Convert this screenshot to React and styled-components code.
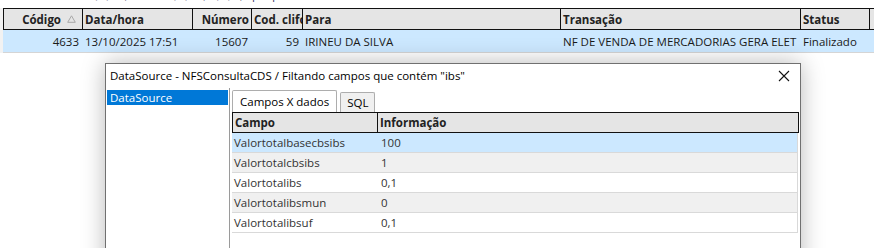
import React from "react";
import styled, { createGlobalStyle } from "styled-components";

const Global = createGlobalStyle`
  html, body { margin: 0; padding: 0; background: #fff; }
  body { font-family: "Open Sans", "Noto Sans", sans-serif; font-size: 11.5px; color: #1a1a1a; }
  * { box-sizing: border-box; }
`;

const Page = styled.div`
  position: relative;
  width: 874px;
  height: 248px;
  overflow: hidden;
  background: #fff;
`;

const TopStrip = styled.div`
  height: 8px;
  overflow: hidden;
`;

const ClippedLine = styled.div`
  margin-top: -12px;
  padding-left: 70px;
  line-height: 14px;
  color: #3d3a66;
  white-space: nowrap;
  letter-spacing: 3px;
`;

const COLS = "79px 110px 59px 51px 258px 240px 69px 1fr";

const MainGrid = styled.div`
  padding-left: 3px;
  background: #f2f2f2;
`;

const HeadRow = styled.div`
  display: grid;
  grid-template-columns: ${COLS};
  background: #e5e5e5;
  border-top: 1px solid #111;
  border-bottom: 1px solid #111;
  border-left: 1px solid #111;
  height: 22px;
`;

const HeadCell = styled.div`
  display: flex;
  align-items: center;
  justify-content: ${(p) => (p.$right ? "flex-end" : "flex-start")};
  gap: 6px;
  padding: 0 ${(p) => (p.$pr ? p.$pr : "2px")} 0 2px;
  border-right: 1px solid #111;
  font-weight: 700;
  color: #222;
  white-space: nowrap;
  overflow: hidden;
  text-overflow: clip;
`;

const DataRow = styled.div`
  display: grid;
  grid-template-columns: ${COLS};
  height: 23px;
  background: #cce8ff;
  border-bottom: 1px solid #d5d5d5;
`;

const DataCell = styled.div`
  display: flex;
  align-items: center;
  justify-content: ${(p) => (p.$right ? "flex-end" : "flex-start")};
  padding: 0 3px 0 3px;
  white-space: nowrap;
  overflow: hidden;
  color: #1a1a1a;
`;

const Dialog = styled.div`
  position: absolute;
  left: 105px;
  top: 63px;
  width: 696px;
  height: 220px;
  background: #fff;
  border: 1px solid #707070;
  box-shadow: 0 0 22px rgba(0, 0, 0, 0.28);
  display: flex;
  flex-direction: column;
`;

const TitleBar = styled.div`
  height: 24px;
  display: flex;
  align-items: center;
  justify-content: space-between;
  padding: 0 10px 1px 4px;
  color: #000;
  white-space: nowrap;
`;

const Body = styled.div`
  flex: 1;
  display: flex;
`;

const SidePanel = styled.div`
  width: 124px;
  border-right: 1px solid #9a9a9a;
  padding: 2px 1px 0 1px;
`;

const ListItem = styled.div`
  height: 15px;
  line-height: 15px;
  padding-left: 3px;
  background: ${(p) => (p.$selected ? "#0078d7" : "transparent")};
  color: ${(p) => (p.$selected ? "#fff" : "#000")};
`;

const MainPanel = styled.div`
  flex: 1;
  padding: 2px 0 0 2px;
`;

const Tabs = styled.div`
  display: flex;
  align-items: flex-end;
  gap: 3px;
  height: 22px;
`;

const Tab = styled.div`
  height: ${(p) => (p.$active ? "22px" : "20px")};
  padding: 0 ${(p) => (p.$active ? "7px" : "6px")};
  display: flex;
  align-items: center;
  border: 1px solid #adadad;
  border-bottom: none;
  border-radius: 2px 2px 0 0;
  background: ${(p) => (p.$active ? "#fff" : "#f0f0f0")};
  color: #000;
`;

const Table = styled.div`
  width: 567px;
`;

const TCOLS = "145px 1fr";

const THead = styled.div`
  display: grid;
  grid-template-columns: ${TCOLS};
  height: 21px;
  background: #e5e5e5;
  border: 1px solid #111;
`;

const THeadCell = styled.div`
  display: flex;
  align-items: center;
  padding-left: 2px;
  font-weight: 700;
  color: #222;
  border-right: ${(p) => (p.$last ? "none" : "1px solid #111")};
`;

const TRow = styled.div`
  display: grid;
  grid-template-columns: ${TCOLS};
  width: 566px;
  height: 20px;
  background: ${(p) => (p.$selected ? "#cce8ff" : p.$alt ? "#f0f0f0" : "#fff")};
  border-bottom: 1px solid #d9d9d9;
  border-right: 1px solid #d9d9d9;
`;

const TCell = styled.div`
  display: flex;
  align-items: center;
  padding-left: ${(p) => (p.$second ? "4px" : "2px")};
  color: #333;
`;

const SortIcon = () => (
  <svg width="9" height="8" viewBox="0 0 9 8">
    <path d="M4.5 0.8 L8.3 7.3 L0.7 7.3 Z" fill="none" stroke="#a8a8a8" strokeWidth="1" />
  </svg>
);

const CloseIcon = () => (
  <svg width="12" height="12" viewBox="0 0 12 12">
    <path d="M1 1 L11 11 M11 1 L1 11" stroke="#111" strokeWidth="1.1" />
  </svg>
);

const rows = [
  ["Valortotalbasecbsibs", "100"],
  ["Valortotalcbsibs", "1"],
  ["Valortotalibs", "0,1"],
  ["Valortotalibsmun", "0"],
  ["Valortotalibsuf", "0,1"],
];

export default function App() {
  return (
    <Page>
      <Global />
      <TopStrip>
        <ClippedLine>, , ( ), ; , , , ( ), ; ( ) ; p q</ClippedLine>
      </TopStrip>
      <MainGrid>
        <HeadRow>
          <HeadCell $right $pr="6px">
            Código <SortIcon />
          </HeadCell>
          <HeadCell>Data/hora</HeadCell>
          <HeadCell $right>Número</HeadCell>
          <HeadCell>Cod. clifor</HeadCell>
          <HeadCell>Para</HeadCell>
          <HeadCell>Transação</HeadCell>
          <HeadCell>Status</HeadCell>
          <HeadCell />
        </HeadRow>
        <DataRow>
          <DataCell $right>4633</DataCell>
          <DataCell>13/10/2025 17:51</DataCell>
          <DataCell $right>15607</DataCell>
          <DataCell $right>59</DataCell>
          <DataCell>IRINEU DA SILVA</DataCell>
          <DataCell>NF DE VENDA DE MERCADORIAS GERA ELET</DataCell>
          <DataCell>Finalizado</DataCell>
          <DataCell />
        </DataRow>
      </MainGrid>

      <Dialog>
        <TitleBar>
          <span>DataSource - NFSConsultaCDS / Filtando campos que contém "ibs"</span>
          <CloseIcon />
        </TitleBar>
        <Body>
          <SidePanel>
            <ListItem $selected>DataSource</ListItem>
          </SidePanel>
          <MainPanel>
            <Tabs>
              <Tab $active>Campos X dados</Tab>
              <Tab>SQL</Tab>
            </Tabs>
            <Table>
              <THead>
                <THeadCell>Campo</THeadCell>
                <THeadCell $last>Informação</THeadCell>
              </THead>
              {rows.map(([k, v], i) => (
                <TRow key={k} $selected={i === 0} $alt={i % 2 === 1}>
                  <TCell>{k}</TCell>
                  <TCell $second>{v}</TCell>
                </TRow>
              ))}
            </Table>
          </MainPanel>
        </Body>
      </Dialog>
    </Page>
  );
}
